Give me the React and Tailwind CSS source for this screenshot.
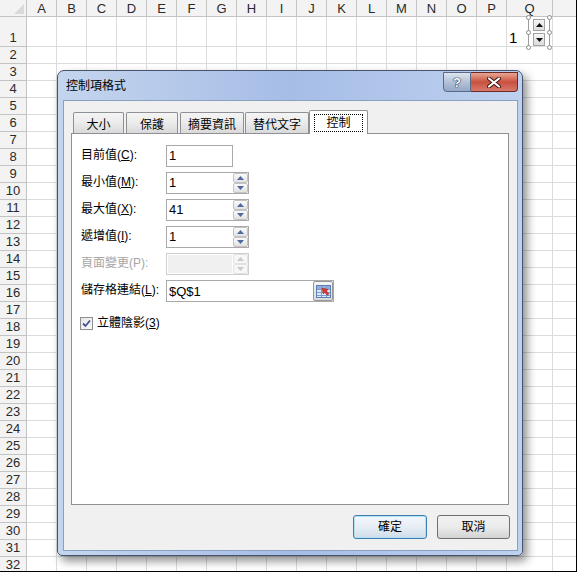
const COLS = ['A', 'B', 'C', 'D', 'E', 'F', 'G', 'H', 'I', 'J', 'K', 'L', 'M', 'N', 'O', 'P', 'Q']
const ROWS = Array.from({ length: 32 }, (_, i) => i + 1)

const ui = "font-['Liberation_Sans','Noto_Sans_CJK_TC',sans-serif]"

function Sheet() {
  return (
    <div className="flex flex-col">
      <div className="flex h-[17px] shrink-0">
        <div className="w-[27px] shrink-0 flex items-end justify-end pr-[2px] pb-[2px] bg-[#f3f3f3] border-r border-b border-[#c4c4c4]">
          <svg width="10" height="10" viewBox="0 0 10 10">
            <path d="M10 0L10 10L0 10Z" fill="#dadada" />
          </svg>
        </div>
        {COLS.map((c) => (
          <div
            key={c}
            className={`${c === 'Q' ? 'w-[46px]' : 'w-[30px]'} shrink-0 flex items-center justify-center bg-[#f3f3f3] border-r border-b border-[#c4c4c4] text-[13px] leading-none text-[#2a2a2a]`}
          >
            {c}
          </div>
        ))}
        <div className="flex-1 bg-[#f3f3f3] border-b border-[#c4c4c4]" />
      </div>
      {ROWS.map((r) => (
        <div key={r} className={`flex shrink-0 ${r === 1 ? 'h-[30px]' : 'h-[17px]'}`}>
          <div className="w-[27px] shrink-0 flex items-end justify-center pb-[1px] bg-[#f3f3f3] border-r border-b border-[#c4c4c4] text-[13px] leading-[15px] text-[#2a2a2a]">
            {r}
          </div>
          {COLS.map((c) => (
            <div
              key={c}
              className={`${c === 'Q' ? 'w-[46px]' : 'w-[30px]'} shrink-0 flex items-end pl-[2px] border-r border-b border-[#dadcdd] text-[15px] leading-[17px] text-black`}
            >
              {r === 1 && c === 'Q' ? '1' : null}
            </div>
          ))}
          <div className="flex-1 border-b border-[#dadcdd]" />
        </div>
      ))}
    </div>
  )
}

function Handle({ pos }) {
  return <div className={`absolute ${pos} w-[5px] h-[5px] rounded-full bg-white border border-[#8c8c8c]`} />
}

function SheetSpinner() {
  return (
    <div className="absolute left-[528px] top-[18px] w-[22px] h-[29px] border-l border-r border-[#9c9c9c] flex flex-col items-center justify-center gap-[2px]">
      <div className="w-[12px] h-[12px] flex items-center justify-center border border-[#a3a3a3] bg-gradient-to-b from-[#f6f6f6] to-[#dcdcdc]">
        <svg width="7" height="4" viewBox="0 0 7 4"><path d="M0 4L3.5 0L7 4Z" fill="#111" /></svg>
      </div>
      <div className="w-[12px] h-[13px] flex items-center justify-center border border-[#a3a3a3] bg-gradient-to-b from-[#f6f6f6] to-[#dcdcdc]">
        <svg width="7" height="4" viewBox="0 0 7 4"><path d="M0 0L7 0L3.5 4Z" fill="#111" /></svg>
      </div>
      <Handle pos="-left-[3px] -top-[3px]" />
      <Handle pos="-right-[3px] -top-[3px]" />
      <Handle pos="-left-[3px] top-[12px]" />
      <Handle pos="-right-[3px] top-[12px]" />
      <Handle pos="-left-[3px] -bottom-[3px]" />
      <Handle pos="-right-[3px] -bottom-[3px]" />
    </div>
  )
}

function SpinArrows({ disabled }) {
  return (
    <div className="w-[15px] shrink-0 flex flex-col">
      {['up', 'down'].map((d) => (
        <div
          key={d}
          className={`flex-1 flex items-center justify-center border rounded-[2px] ${
            disabled ? 'border-[#e2e2e2] bg-[#f7f7f7]' : 'border-[#c3c3c3] bg-gradient-to-b from-[#fbfbfb] to-[#e2e2e2]'
          }`}
        >
          <svg width="7" height="4" viewBox="0 0 7 4">
            <path d={d === 'up' ? 'M0 4L3.5 0L7 4Z' : 'M0 0L7 0L3.5 4Z'} fill={disabled ? '#c9c9c9' : '#4d6b9e'} />
          </svg>
        </div>
      ))}
    </div>
  )
}

function Label({ text, k, disabled }) {
  return (
    <div
      className={`w-[85px] shrink-0 h-[22px] flex items-center pb-[3px] text-[12px] leading-[14px] whitespace-nowrap ${
        disabled ? 'text-[#a6a6a6]' : 'text-black'
      }`}
    >
      {text}(
      {disabled ? k : <span className="underline underline-offset-[1px]">{k}</span>}
      ):
    </div>
  )
}

function SpinField({ text, k, value, disabled }) {
  return (
    <div className="flex items-center h-[22px]">
      <Label text={text} k={k} disabled={disabled} />
      <div
        className={`w-[83px] h-[22px] flex border ${
          disabled ? 'border-[#cfcfcf] bg-white' : 'border-[#a9a9a9] bg-white'
        }`}
      >
        <div className={`flex-1 flex items-center pl-[2px] text-[13px] ${disabled ? 'bg-[#f0f0f0] mr-[1px] my-[1px] ml-[1px]' : ''}`}>
          {value}
        </div>
        <SpinArrows disabled={disabled} />
      </div>
    </div>
  )
}

function RefIcon() {
  return (
    <svg width="15" height="13" viewBox="0 0 15 13">
      <rect x="0.5" y="0.5" width="14" height="12" fill="#dfeaf8" stroke="#5b7fb6" />
      <rect x="1" y="1" width="13" height="3" fill="#8fb0dc" />
      <path d="M1 4.5H14M1 7.5H14M1 10.5H14M5.5 1V12M10.5 1V12" stroke="#7b9bcb" strokeWidth="1" />
      <path d="M6 3L12 4.5L10.3 6L13 8.8L11.5 10.3L8.8 7.5L7.3 9Z" fill="#e2362a" stroke="#9b1c12" strokeWidth="0.5" />
    </svg>
  )
}

function Tab({ label, w, gap }) {
  return (
    <div
      className={`${w} ${gap} h-[21px] shrink-0 flex items-center justify-center pt-[3px] border border-b-0 border-[#8e9096] rounded-t-[2px] bg-gradient-to-b from-[#f4f4f4] via-[#ebebeb] to-[#d9d9d9] text-[12px] leading-[14px] text-black`}
    >
      {label}
    </div>
  )
}

function Dialog() {
  return (
    <div className="absolute left-[57px] top-[70px] w-[466px] h-[486px] flex flex-col rounded-t-[7px] rounded-b-[5px] border border-[#46536a] bg-gradient-to-r from-[#c4d5ed] via-[#a6bde6] to-[#bed1ef] shadow-[4px_5px_10px_rgba(0,0,0,0.45)]">
      <div className="h-[29px] shrink-0 flex items-start justify-between pl-[8px] pr-[4px]">
        <div className="pt-[8px] text-[12px] leading-[14px] text-black">控制項格式</div>
        <div className="flex mt-[1px]">
          <div className="w-[28px] h-[20px] flex items-center justify-center rounded-bl-[4px] border border-[#5a6a84] bg-gradient-to-b from-[#dde5f0] via-[#b4c2d8] to-[#95a8c6] text-white font-bold text-[13px] leading-none [text-shadow:0_0_1px_#1e2a3c,0_0_1px_#1e2a3c,0_0_1px_#1e2a3c]">
            ?
          </div>
          <div className="w-[47px] h-[20px] flex items-center justify-center rounded-br-[4px] border border-l-0 border-[#6b2a24] bg-gradient-to-b from-[#e8a595] via-[#c9503f] to-[#d8786a]">
            <svg width="14" height="11" viewBox="0 0 14 11">
              <path d="M2 1.5L12 9.5M12 1.5L2 9.5" stroke="#3b1410" strokeWidth="4" strokeLinecap="round" />
              <path d="M2 1.5L12 9.5M12 1.5L2 9.5" stroke="#fff" strokeWidth="2.2" strokeLinecap="round" />
            </svg>
          </div>
        </div>
      </div>

      <div className="flex-1 mx-[5px] mb-[4px] ml-[5px] mr-[4px] border border-[#8aa0c2] bg-[#f0f0f0] flex flex-col pt-[9px] pl-[7px] pr-[8px]">
        <div className="relative z-10 flex items-end h-[23px] pl-[2px]">
          <Tab label="大小" w="w-[51px]" gap="" />
          <Tab label="保護" w="w-[52px]" gap="ml-[2px]" />
          <Tab label="摘要資訊" w="w-[64px]" gap="ml-[2px]" />
          <Tab label="替代文字" w="w-[64px]" gap="ml-[1px]" />
          <div className="w-[59px] h-[24px] -mb-[1px] shrink-0 flex items-start justify-center pt-[3px] px-[4px] border border-b-0 border-[#8e9096] rounded-t-[2px] bg-white">
            <div className="w-full h-[18px] flex items-center justify-center border border-dotted border-black text-[12px] leading-[14px] text-black">
              控制
            </div>
          </div>
        </div>

        <div className="h-[372px] shrink-0 border border-[#8e9096] bg-white flex flex-col pt-[11px] pl-[9px] gap-[5px]">
          <div className="flex items-center h-[22px]">
            <Label text="目前值" k="C" />
            <div className="w-[67px] h-[22px] flex items-center pl-[2px] border border-[#a9a9a9] bg-white text-[13px]">1</div>
          </div>
          <SpinField text="最小值" k="M" value="1" />
          <SpinField text="最大值" k="X" value="41" />
          <SpinField text="遞增值" k="I" value="1" />
          <SpinField text="頁面變更" k="P" value="" disabled />
          <div className="flex items-center h-[22px]">
            <Label text="儲存格連結" k="L" />
            <div className="w-[168px] h-[22px] flex items-center border border-[#a9a9a9] bg-white">
              <div className="flex-1 pl-[2px] text-[13px] leading-none">$Q$1</div>
              <div className="w-[20px] h-[20px] flex items-center justify-center rounded-[2px] border border-[#979797] bg-gradient-to-b from-[#f5f5f5] to-[#dadada]">
                <RefIcon />
              </div>
            </div>
          </div>
          <div className="flex items-center gap-[4px] mt-[9px] -ml-[1px]">
            <div className="w-[13px] h-[13px] flex items-center justify-center border border-[#8e8f8f] bg-gradient-to-br from-[#e6e6e6] to-[#fbfbfb]">
              <svg width="9" height="9" viewBox="0 0 9 9">
                <path d="M1 4.5L3.5 7L8 1.5" stroke="#3f5597" strokeWidth="1.8" fill="none" />
              </svg>
            </div>
            <div className="text-[12px] leading-[14px] text-black">
              立體陰影(<span className="underline underline-offset-[1px]">3</span>)
            </div>
          </div>
        </div>

        <div className="flex justify-end gap-[10px] mt-[10px] -mr-[1px]">
          <div className="w-[74px] h-[24px] flex items-center justify-center rounded-[3px] border border-[#3c7fb1] bg-gradient-to-b from-[#f2f7fb] via-[#e6eef5] to-[#cfdde9] shadow-[inset_0_0_0_1px_#b6e0f6] text-[12px] leading-[14px] text-black">
            確定
          </div>
          <div className="w-[73px] h-[24px] flex items-center justify-center rounded-[3px] border border-[#707070] bg-gradient-to-b from-[#f2f2f2] via-[#ebebeb] to-[#d3d3d3] text-[12px] leading-[14px] text-black">
            取消
          </div>
        </div>
      </div>
    </div>
  )
}

export default function App() {
  return (
    <div className={`relative w-[577px] h-[572px] overflow-hidden bg-white border-r border-b border-black ${ui}`}>
      <Sheet />
      <SheetSpinner />
      <Dialog />
    </div>
  )
}
